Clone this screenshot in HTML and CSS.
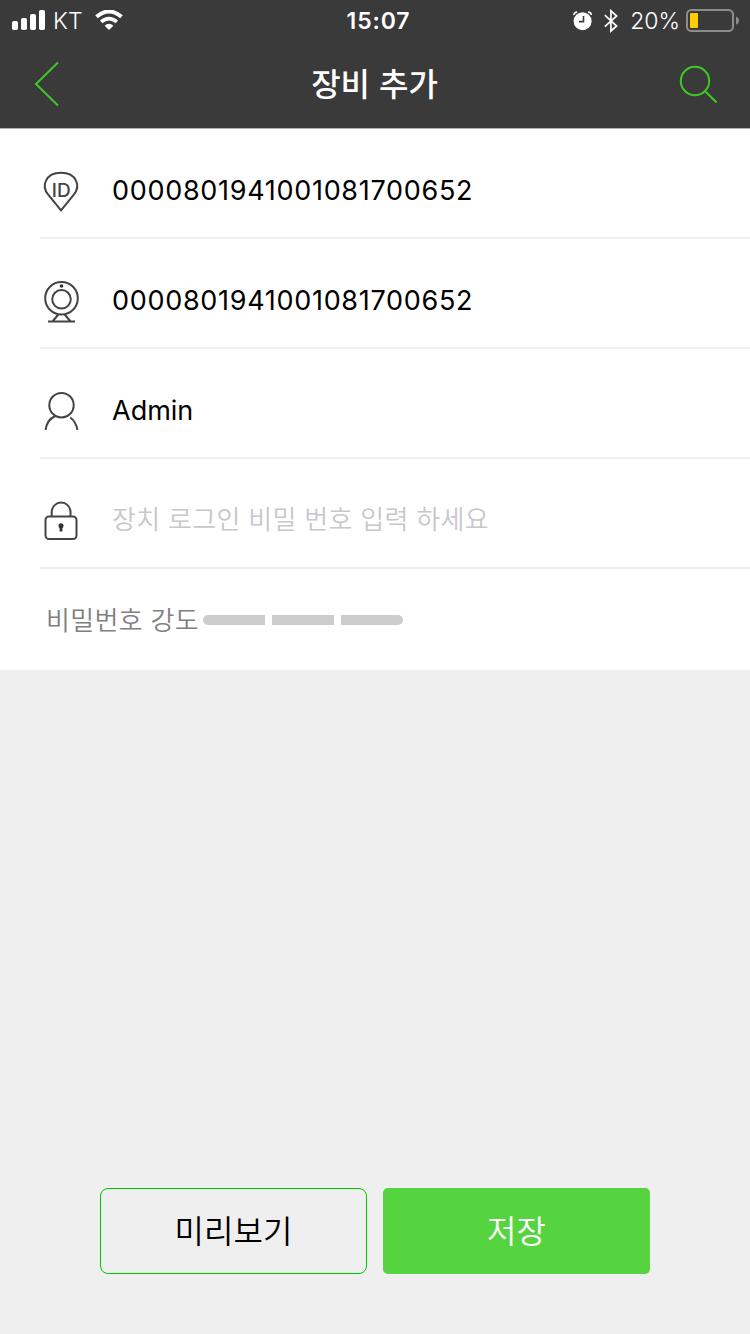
FILE: index.html
```html
<!DOCTYPE html>
<html lang="ko">
<head>
    <meta charset="UTF-8">
    <meta name="viewport" content="width=device-width, initial-scale=1.0">
    <title>장비 추가</title>
    <link rel="stylesheet" href="styles.css">
</head>
<body>
    <!-- Header -->
    <header class="header">
        <div class="status-bar">
            <div class="status-left">
                <svg class="signal" width="34" height="20" viewBox="0 0 34 20" fill="#fff">
                    <rect x="0" y="11" width="6" height="9" rx="1.8"/>
                    <rect x="9" y="8" width="6" height="12" rx="1.8"/>
                    <rect x="18" y="4" width="6" height="16" rx="1.8"/>
                    <rect x="27" y="0" width="6" height="20" rx="1.8"/>
                </svg>
                <span class="carrier">KT</span>
                <svg class="wifi" width="28" height="20" viewBox="0 0 28 20">
                    <path d="M1.5 6.8 Q14 -3.8 26.5 6.8" fill="none" stroke="#fff" stroke-width="4"/>
                    <path d="M6.2 11.9 Q14 5.4 21.8 11.9" fill="none" stroke="#fff" stroke-width="3.7"/>
                    <path d="M9.6 15.7 Q14 12 18.4 15.7 L14 20Z" fill="#fff"/>
                </svg>
            </div>
            <span class="clock">15:07</span>
            <div class="status-right">
                <svg class="alarm" width="20" height="20" viewBox="0 0 20 20">
                    <circle cx="9.6" cy="10.2" r="9" fill="#fff"/>
                    <path d="M.8 4 Q1 1.2 4.2 1M15 1 Q18.2 1.2 18.4 4" fill="none" stroke="#fff" stroke-width="1.6"/>
                    <path d="M10.5 5v5.6H6" fill="none" stroke="#3a3a3a" stroke-width="1.6"/>
                </svg>
                <svg class="bluetooth" width="14" height="24" viewBox="0 0 14 24">
                    <path d="M.8 6.2 L12.6 17 L6.9 22 V1.8 L12.6 7 L.8 17.6" fill="none" stroke="#fff" stroke-width="1.7"/>
                </svg>
                <span class="percent">20%</span>
                <svg class="battery" width="54" height="24" viewBox="0 0 54 24">
                    <rect x="1" y="1" width="46" height="21" rx="4.5" fill="none" stroke="#8d8d8d" stroke-width="2"/>
                    <rect x="4" y="4" width="8" height="15" rx="1" fill="#ffcc00"/>
                    <path d="M50 7.5 Q53 8.5 53 11.5 T50 15.5Z" fill="#8d8d8d"/>
                </svg>
            </div>
        </div>
        <div class="nav-bar">
            <svg class="back" width="26" height="46" viewBox="0 0 26 46">
                <path d="M24 1.5 L2 23 L24 44.5" fill="none" stroke="#3fc926" stroke-width="2"/>
            </svg>
            <h1 class="title">장비 추가</h1>
            <svg class="search" width="38" height="38" viewBox="0 0 38 38">
                <circle cx="16" cy="16" r="14.2" fill="none" stroke="#3fc926" stroke-width="2"/>
                <path d="M26 26 L37.5 37.5" stroke="#3fc926" stroke-width="2"/>
            </svg>
        </div>
    </header>

    <!-- Device form -->
    <main class="form">
        <div class="row">
            <svg class="icon" width="42" height="46" viewBox="0 0 42 46">
                <path d="M21 41.3 L8.2 25.7 C4.8 21.5 3.8 16 6 11.6 C8.6 6 14.7 3.7 21 3.7 C27.3 3.7 33.4 6 36 11.6 C38.2 16 37.2 21.5 33.8 25.7Z"/>
                <text class="icon-id" x="11.8" y="27.5">ID</text>
            </svg>
            <span class="value value-number">0000801941001081700652</span>
        </div>
        <div class="row">
            <svg class="icon" width="42" height="46" viewBox="0 0 42 46">
                <circle cx="21.5" cy="19.3" r="16.3"/>
                <circle cx="21.5" cy="20.3" r="9.3"/>
                <circle class="solid" cx="21.5" cy="7" r="1.8"/>
                <path d="M18.3 35.5 L12.5 42.5 M24.7 35.5 L30.5 42.5 M8 42.5 H35"/>
            </svg>
            <span class="value value-number">0000801941001081700652</span>
        </div>
        <div class="row">
            <svg class="icon" width="42" height="46" viewBox="0 0 42 46">
                <circle cx="21.5" cy="16.2" r="12.2"/>
                <path d="M5.6 41 Q6.6 31 15.4 27 M30.3 28.5 Q36.3 33 37.4 41"/>
            </svg>
            <span class="value">Admin</span>
        </div>
        <div class="row">
            <svg class="icon" width="42" height="46" viewBox="0 0 42 46">
                <rect x="5.5" y="17.5" width="31" height="22.5" rx="3.5"/>
                <path d="M11.7 17.5 V13 A9.4 9.4 0 0 1 30.5 13 V17.5"/>
                <circle class="solid" cx="21" cy="26.8" r="2.5"/>
                <path class="solid" d="M19.6 27.5 H22.4 V32.5 H19.6Z"/>
            </svg>
            <span class="placeholder">장치 로그인 비밀 번호 입력 하세요</span>
        </div>
        <div class="strength">
            <span class="strength-label">비밀번호 강도</span>
            <div class="strength-bar">
                <i></i><i></i><i></i>
            </div>
        </div>
    </main>

    <!-- Buttons -->
    <footer class="actions">
        <button class="btn btn-preview">미리보기</button>
        <button class="btn btn-save">저장</button>
    </footer>
</body>
</html>
```

FILE: styles.css
```css
* {
    box-sizing: border-box;
}

body {
    margin: 0;
    width: 750px;
    height: 1334px;
    display: flex;
    flex-direction: column;
    overflow: hidden;
    background: #efefef;
    color: #000;
    font-family: Inter, "Noto Sans CJK KR", sans-serif;
}

svg {
    display: block;
    flex: none;
}

/* Header */
.header {
    height: 129px;
    flex: none;
    background: #3a3a3a;
    border-bottom: 1px solid #b4b4b4;
    color: #fff;
}

.status-bar {
    display: grid;
    grid-template-columns: 1fr auto 1fr;
    height: 40px;
    padding: 0 10px 0 12px;
    font-size: 23px;
    line-height: 42px;
}

.status-left,
.status-right {
    display: flex;
    align-items: center;
    height: 40px;
}

.status-right {
    justify-content: flex-end;
    height: 41px;
}

.carrier {
    margin: 0 12px 0 7px;
    padding-top: 2px;
    font-weight: 300;
}

.clock {
    font-weight: 600;
    letter-spacing: 0.9px;
    padding-left: 5px;
}

.alarm {
    margin-right: 11px;
}

.bluetooth {
    margin-right: 12px;
}

.percent {
    margin-right: 6px;
    font-weight: 300;
}

.battery {
    margin-top: 1px;
}

.nav-bar {
    display: flex;
    align-items: center;
    justify-content: space-between;
    height: 88px;
    padding: 0 33px 0 34px;
}

.search {
    margin-bottom: 1px;
}

.title {
    margin: 0 0 4px 10px;
    font-size: 32px;
    font-weight: 500;
    line-height: 50px;
    font-family: "Noto Sans CJK KR", sans-serif;
}

/* Form */
.form {
    height: 541px;
    flex: none;
    background: #fff;
}

.row {
    display: flex;
    align-items: center;
    height: 110px;
    margin-left: 40px;
    padding-top: 18px;
    border-bottom: 2px solid #efeff1;
}

.icon {
    fill: none;
    stroke: #444;
    stroke-width: 2;
    margin-right: 30px;
}

.icon .solid {
    fill: #333;
    stroke: none;
}

.icon-id {
    fill: #444;
    stroke: none;
    font-size: 19px;
    font-weight: 500;
}

.value {
    padding-bottom: 4px;
    font-size: 27px;
}

.value-number {
    letter-spacing: 0.7px;
}

.placeholder {
    padding-bottom: 9px;
    color: #c7c7cd;
    font-family: "Noto Sans CJK KR", sans-serif;
    font-size: 26px;
    font-weight: 350;
    letter-spacing: 0.3px;
}

.strength {
    display: flex;
    align-items: center;
    height: 101px;
    padding-left: 46px;
}

.strength-label {
    padding-bottom: 3px;
    color: #808080;
    font-family: "Noto Sans CJK KR", sans-serif;
    font-size: 26px;
    font-weight: 350;
    letter-spacing: 0.3px;
    width: 157px;
    white-space: nowrap;
}

.strength-bar {
    display: flex;
    gap: 7px;
    width: 200px;
    height: 10px;
    border-radius: 5px;
    overflow: hidden;
}

.strength-bar i {
    flex: 1;
    background: #ccc;
}

/* Buttons */
.actions {
    display: flex;
    gap: 16px;
    margin-top: auto;
    padding: 0 100px 60px;
}

.btn {
    flex: 1 1 0;
    min-width: 267px;
    height: 86px;
    padding: 0 0 4px;
    border: 1px solid #00c800;
    border-radius: 8px;
    background: none;
    color: #000;
    font-family: "Noto Sans CJK KR", sans-serif;
    font-size: 32px;
    font-weight: 350;
}

.btn-save {
    border: none;
    border-radius: 5px;
    background: #56d440;
    color: #fff;
}
```
